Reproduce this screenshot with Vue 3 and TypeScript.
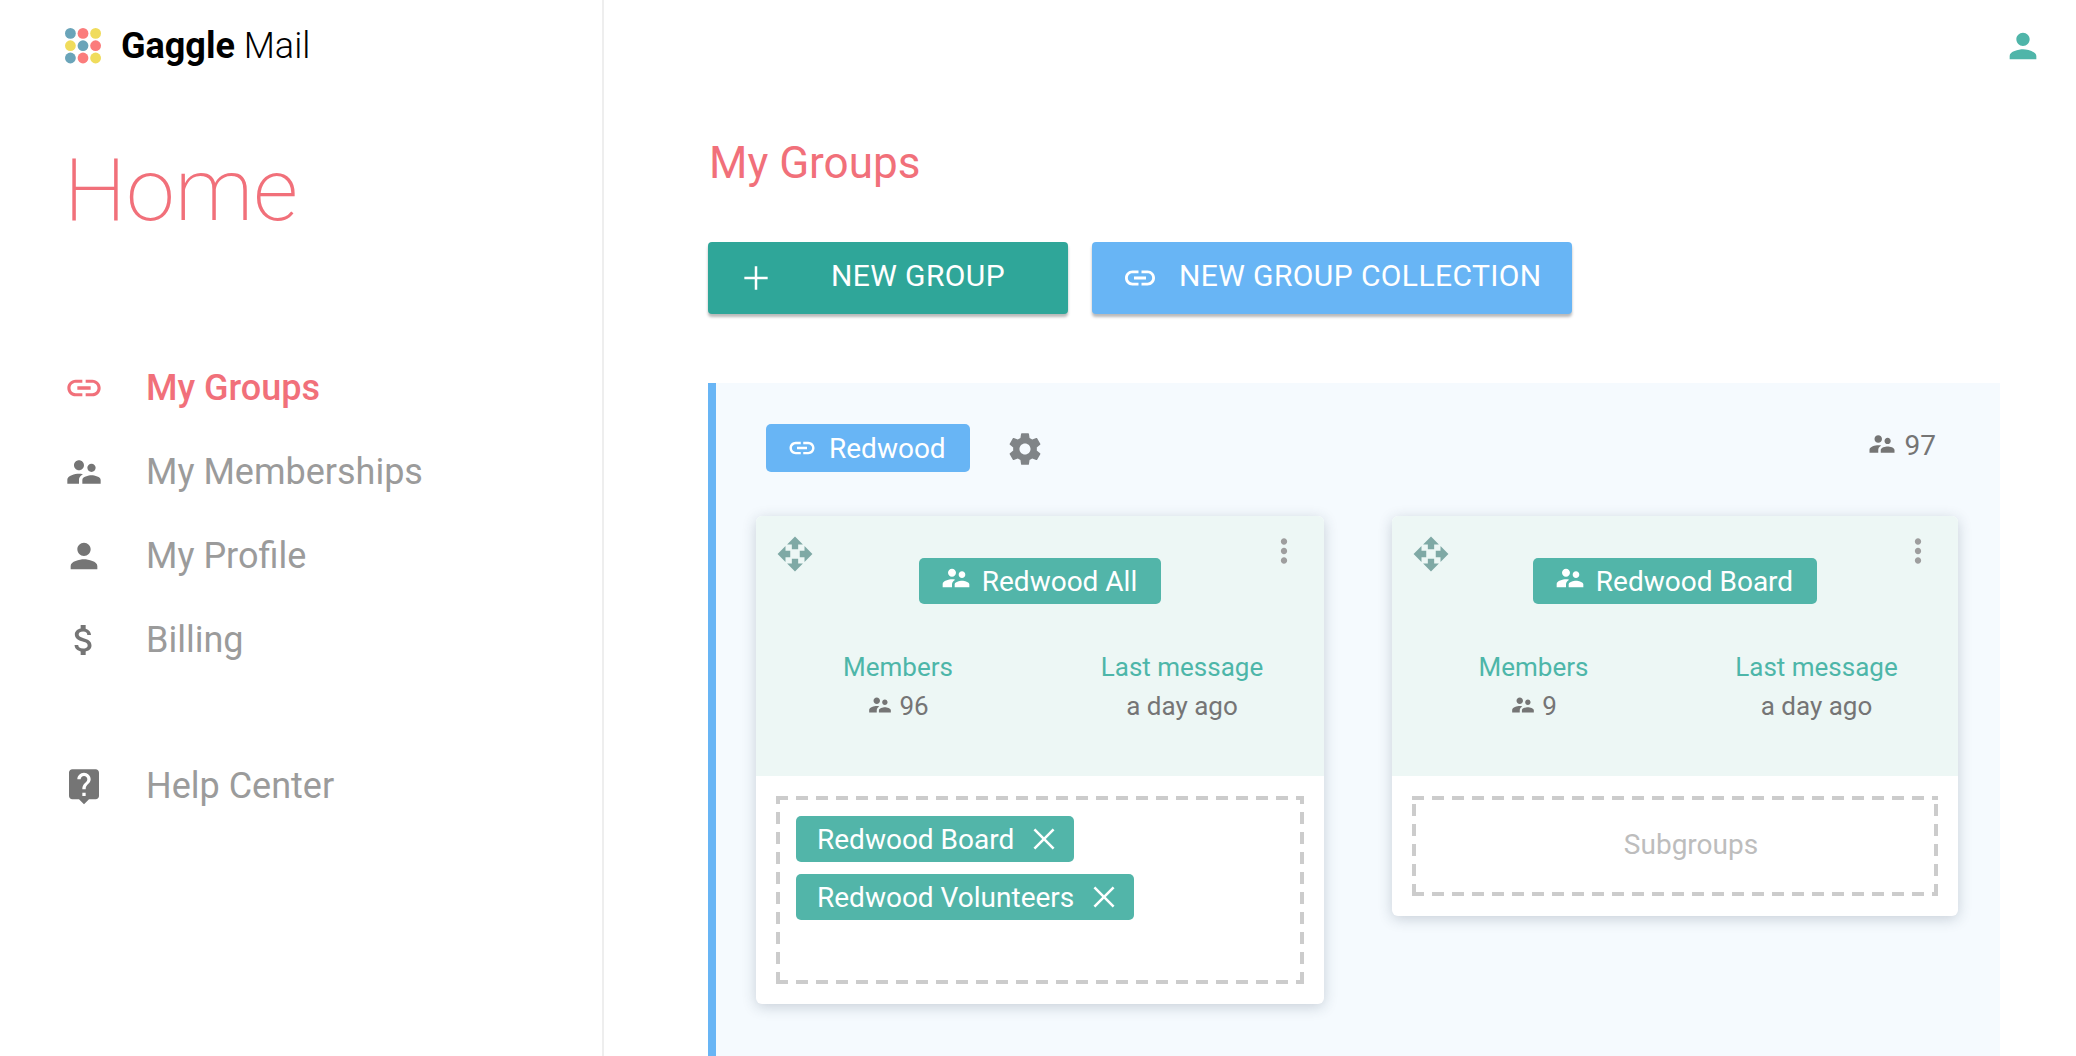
<script setup lang="ts">
const icons: Record<string, string> = {
  link: 'M3.9 12c0-1.71 1.39-3.1 3.1-3.1h4V7H7c-2.76 0-5 2.24-5 5s2.24 5 5 5h4v-1.9H7c-1.71 0-3.1-1.39-3.1-3.1zM8 13h8v-2H8v2zm9-6h-4v1.9h4c1.71 0 3.1 1.39 3.1 3.1s-1.39 3.1-3.1 3.1h-4V17h4c2.76 0 5-2.24 5-5s-2.24-5-5-5z',
  people: 'M16.5 12c1.38 0 2.49-1.12 2.49-2.5S17.88 7 16.5 7C15.12 7 14 8.12 14 9.5s1.12 2.5 2.5 2.5zM9 11c1.66 0 2.99-1.34 2.99-3S10.66 5 9 5C7.34 5 6 6.34 6 8s1.34 3 3 3zm7.5 3c-1.83 0-5.5.92-5.5 2.75V19h11v-2.25c0-1.83-3.67-2.75-5.5-2.75zM9 13c-2.33 0-7 1.17-7 3.5V19h7v-2.25c0-.85.33-2.34 2.37-3.47C10.5 13.1 9.66 13 9 13z',
  person: 'M12 12c2.21 0 4-1.79 4-4s-1.79-4-4-4-4 1.79-4 4 1.79 4 4 4zm0 2c-2.67 0-8 1.34-8 4v2h16v-2c0-2.66-5.33-4-8-4z',
  money: 'M11.8 10.9c-2.27-.59-3-1.2-3-2.15 0-1.09 1.01-1.85 2.7-1.85 1.78 0 2.44.85 2.5 2.1h2.21c-.07-1.72-1.12-3.3-3.21-3.81V3h-3v2.16c-1.94.42-3.5 1.68-3.5 3.61 0 2.31 1.91 3.46 4.7 4.13 2.5.6 3 1.48 3 2.41 0 .69-.49 1.79-2.7 1.79-2.06 0-2.87-.92-2.98-2.1h-2.2c.12 2.19 1.76 3.42 3.68 3.83V21h3v-2.15c1.95-.37 3.5-1.5 3.5-3.55 0-2.84-2.43-3.81-4.7-4.4z',
  help: 'M19 2H5c-1.11 0-2 .9-2 2v14c0 1.1.89 2 2 2h4l3 3 3-3h4c1.1 0 2-.9 2-2V4c0-1.1-.9-2-2-2zm-6 16h-2v-2h2v2zm2.07-7.75l-.9.92C13.45 11.9 13 12.5 13 14h-2v-.5c0-1.1.45-2.1 1.17-2.83l1.24-1.26c.37-.36.59-.86.59-1.41 0-1.1-.9-2-2-2s-2 .9-2 2H8c0-2.21 1.79-4 4-4s4 1.79 4 4c0 .88-.36 1.68-.93 2.25z',
  gear: 'M19.43 12.98c.04-.32.07-.64.07-.98s-.03-.66-.07-.98l2.11-1.65c.19-.15.24-.42.12-.64l-2-3.46c-.12-.22-.39-.3-.61-.22l-2.49 1c-.52-.4-1.08-.73-1.69-.98l-.38-2.65C14.46 2.18 14.25 2 14 2h-4c-.25 0-.46.18-.49.42l-.38 2.65c-.61.25-1.17.59-1.69.98l-2.49-1c-.23-.09-.49 0-.61.22l-2 3.46c-.13.22-.07.49.12.64l2.11 1.65c-.04.32-.07.65-.07.98s.03.66.07.98l-2.11 1.65c-.19.15-.24.42-.12.64l2 3.46c.12.22.39.3.61.22l2.49-1c.52.4 1.08.73 1.69.98l.38 2.65c.03.24.24.42.49.42h4c.25 0 .46-.18.49-.42l.38-2.65c.61-.25 1.17-.59 1.69-.98l2.49 1c.23.09.49 0 .61-.22l2-3.46c.12-.22.07-.49-.12-.64l-2.11-1.65zM12 15.5c-1.93 0-3.5-1.57-3.5-3.5s1.57-3.5 3.5-3.5 3.5 1.57 3.5 3.5-1.57 3.5-3.5 3.5z',
  more: 'M12 8c1.1 0 2-.9 2-2s-.9-2-2-2-2 .9-2 2 .9 2 2 2zm0 2c-1.1 0-2 .9-2 2s.9 2 2 2 2-.9 2-2-.9-2-2-2zm0 6c-1.1 0-2 .9-2 2s.9 2 2 2 2-.9 2-2-.9-2-2-2z',
  move: 'M10 9h4V6h3l-5-5-5 5h3v3zm-1 1H6V7l-5 5 5 5v-3h3v-4zm14 2l-5-5v3h-3v4h3v3l5-5zm-9 3h-4v3H7l5 5 5-5h-3v-3z',
  plus: 'M19 12.75h-6.25V19h-1.5v-6.25H5v-1.5h6.25V5h1.5v6.25H19z',
  close: 'M19 6.2 17.8 5 12 10.8 6.2 5 5 6.2 10.8 12 5 17.8 6.2 19 12 13.2 17.8 19 19 17.8 13.2 12z',
}

const nav = [
  { label: 'My Groups', icon: 'link', active: true },
  { label: 'My Memberships', icon: 'people' },
  { label: 'My Profile', icon: 'person' },
  { label: 'Billing', icon: 'money' },
  { label: 'Help Center', icon: 'help', spaced: true },
]

const dotColors = ['#6aa4b9', '#fb7c7c', '#f0dc5c', '#f0dc5c', '#6aa4b9', '#fb7c7c', '#6aa4b9', '#fb7c7c', '#f0dc5c']

const cards = [
  { name: 'Redwood All', members: 96, last: 'a day ago', subgroups: ['Redwood Board', 'Redwood Volunteers'] },
  { name: 'Redwood Board', members: 9, last: 'a day ago', subgroups: [] as string[] },
]
</script>

<template>
  <div class="app">
    <aside class="sidebar">
      <div class="brand">
        <svg class="dots" width="36" height="36" viewBox="0 0 36 36">
          <circle
            v-for="(c, i) in dotColors"
            :key="i"
            :cx="5.4 + (i % 3) * 12.6"
            :cy="5.4 + Math.floor(i / 3) * 12.3"
            r="5.4"
            :fill="c"
          />
        </svg>
        <span class="brand-name"><b>Gaggle</b> Mail</span>
      </div>
      <h1 class="home">Home</h1>
      <nav class="nav">
        <a
          v-for="item in nav"
          :key="item.label"
          class="nav-item"
          :class="{ active: item.active, spaced: item.spaced }"
        >
          <svg class="nav-icon" viewBox="0 0 24 24"><path :d="icons[item.icon]" /></svg>
          <span>{{ item.label }}</span>
        </a>
      </nav>
    </aside>

    <main class="main">
      <div class="topbar">
        <svg class="user" viewBox="0 0 24 24"><path :d="icons.person" /></svg>
      </div>
      <h2 class="title">My Groups</h2>
      <div class="actions">
        <button class="btn btn-teal">
          <svg class="btn-plus" viewBox="0 0 24 24"><path :d="icons.plus" /></svg>
          <span>NEW GROUP</span>
        </button>
        <button class="btn btn-blue">
          <svg class="btn-link" viewBox="0 0 24 24"><path :d="icons.link" /></svg>
          <span>NEW GROUP COLLECTION</span>
        </button>
      </div>

      <section class="panel">
        <header class="panel-head">
          <span class="collection">
            <svg viewBox="0 0 24 24"><path :d="icons.link" /></svg>
            Redwood
          </span>
          <svg class="gear" viewBox="0 0 24 24"><path :d="icons.gear" /></svg>
          <span class="total">
            <svg viewBox="0 0 24 24"><path :d="icons.people" /></svg>
            97
          </span>
        </header>

        <div class="cards">
          <article v-for="card in cards" :key="card.name" class="card">
            <div class="card-head">
              <svg class="move" viewBox="0 0 24 24"><path :d="icons.move" /></svg>
              <svg class="more" viewBox="0 0 24 24"><path :d="icons.more" /></svg>
              <span class="group-chip">
                <svg viewBox="0 0 24 24"><path :d="icons.people" /></svg>
                {{ card.name }}
              </span>
              <div class="stats">
                <div class="stat">
                  <div class="stat-label">Members</div>
                  <div class="stat-value">
                    <svg viewBox="0 0 24 24"><path :d="icons.people" /></svg>
                    {{ card.members }}
                  </div>
                </div>
                <div class="stat">
                  <div class="stat-label">Last message</div>
                  <div class="stat-value">{{ card.last }}</div>
                </div>
              </div>
            </div>
            <div class="card-body">
              <div class="drop" :class="{ empty: !card.subgroups.length }">
                <template v-if="card.subgroups.length">
                  <div>
                    <span v-for="s in card.subgroups" :key="s" class="tag">
                      {{ s }}
                      <svg viewBox="0 0 24 24"><path :d="icons.close" /></svg>
                    </span>
                  </div>
                </template>
                <span v-else class="placeholder">Subgroups</span>
              </div>
            </div>
          </article>
        </div>
      </section>
    </main>
  </div>
</template>

<style>
html, body { margin: 0; background: #fff; }
</style>

<style scoped>
.app {
  display: flex;
  height: 1056px;
  overflow: hidden;
  font-family: Roboto, "Liberation Sans", sans-serif;
  background: #fff;
}
svg { fill: currentColor; display: block; flex: none; }

.sidebar { width: 602px; flex: none; border-right: 2px solid #eeeeee; }
.brand { display: flex; align-items: center; height: 52px; padding: 20px 0 0 65px; }
.dots { margin-right: 20px; }
.brand-name { font-size: 36px; font-weight: 300; color: #000; }
.brand-name b { font-weight: 700; }
.home {
  margin: 74px 0 0 64px;
  font-size: 88px;
  line-height: 88px;
  font-weight: 200;
  color: #f1707a;
}
.nav { margin-top: 112px; }
.nav-item {
  display: flex;
  align-items: center;
  height: 84px;
  padding-left: 64px;
  font-size: 36px;
  color: #9b9b9b;
}
.nav-item.spaced { margin-top: 62px; }
.nav-item.active { color: #f1707a; font-weight: 500; }
.nav-icon { width: 40px; height: 40px; margin-right: 42px; color: #757575; }
.nav-item.active .nav-icon { color: #f1707a; }

.main { flex: 1; display: flex; flex-direction: column; min-width: 0; padding-left: 104px; }
.topbar { display: flex; justify-content: flex-end; height: 110px; padding: 26px 33px 0 0; }
.user { width: 40px; height: 40px; color: #4fb5a9; }
.title {
  margin: 2px 0 0 1px;
  font-size: 44px;
  line-height: 50px;
  font-weight: 450;
  color: #f1707a;
}
.actions { display: flex; gap: 24px; margin-top: 54px; }
.btn {
  display: flex;
  align-items: center;
  height: 72px;
  border: 0;
  border-radius: 4px;
  color: #fff;
  font-family: inherit;
  font-size: 30px;
  letter-spacing: 0.4px;
  box-shadow: 0 3px 3px rgba(0, 0, 0, 0.28);
}
.btn span { margin-top: -5px; }
.btn-teal { width: 360px; background: #2fa699; padding: 0 0 0 28px; }
.btn-plus { width: 40px; height: 40px; margin-right: 55px; }
.btn-blue { width: 480px; background: #68b5f5; padding: 0 0 0 30px; }
.btn-link { width: 36px; height: 36px; margin-right: 21px; }

.panel {
  flex: 1;
  margin-top: 69px;
  border-left: 8px solid #68b5f5;
  background: #f5fafe;
  padding: 41px 42px 0 40px;
  width: 1202px;
}
.panel-head { display: flex; align-items: center; height: 48px; padding-left: 10px; color: #757575; }
.collection {
  display: flex;
  align-items: center;
  height: 48px;
  width: 204px;
  box-sizing: border-box;
  padding-left: 21px;
  background: #68b5f5;
  border-radius: 5px;
  color: #fff;
  font-size: 28px;
}
.collection svg { width: 30px; height: 30px; margin-right: 12px; margin-top: -1px; }
.gear { width: 38px; height: 38px; margin-left: 36px; margin-top: 2px; color: #808487; }
.total { display: flex; align-items: center; margin-left: auto; margin-right: 22px; font-size: 28px; margin-top: -6px; }
.total svg { width: 30px; height: 30px; margin-right: 8px; margin-top: -2px; }

.cards { display: grid; grid-template-columns: 568px 566px; column-gap: 68px; align-items: start; margin-top: 44px; }
.card { background: #fff; border-radius: 6px; overflow: hidden; box-shadow: 0 3px 14px rgba(40, 60, 80, 0.22); }
.card-head {
  position: relative;
  height: 260px;
  box-sizing: border-box;
  padding-top: 42px;
  background: #edf7f5;
  display: flex;
  flex-direction: column;
  align-items: center;
}
.move { position: absolute; left: 20px; top: 19px; width: 38px; height: 38px; color: #7fa9a5; }
.more { position: absolute; right: 21px; top: 16px; width: 38px; height: 38px; color: #9e9e9e; }
.group-chip {
  display: flex;
  align-items: center;
  height: 46px;
  padding: 0 24px 0 21px;
  background: #52b5a9;
  border-radius: 5px;
  color: #fff;
  font-size: 28px;
}
.group-chip svg { width: 32px; height: 32px; margin-right: 10px; margin-top: -6px; }
.stats { display: grid; grid-template-columns: 1fr 1fr; width: 100%; margin-top: 43px; text-align: center; }
.stat-label { font-size: 26px; line-height: 40px; color: #4db6a9; }
.stat-value {
  display: flex;
  align-items: center;
  justify-content: center;
  font-size: 26px;
  line-height: 38px;
  color: #757575;
}
.stat-value svg { width: 26px; height: 26px; margin-right: 6px; margin-top: -2px; }

.card-body { padding: 20px; }
.drop {
  box-sizing: border-box;
  min-height: 100px;
  padding: 20px 20px 52px;
  background:
    repeating-linear-gradient(90deg, #cccccc 0 12px, transparent 12px 20px) top / 100% 4px no-repeat,
    repeating-linear-gradient(90deg, #cccccc 0 12px, transparent 12px 20px) bottom / 100% 4px no-repeat,
    repeating-linear-gradient(0deg, #cccccc 0 12px, transparent 12px 20px) left / 4px 100% no-repeat,
    repeating-linear-gradient(0deg, #cccccc 0 12px, transparent 12px 20px) right / 4px 100% no-repeat;
}
.drop.empty { display: flex; align-items: center; justify-content: center; padding: 0 0 3px 32px; }
.placeholder { font-size: 28px; color: #bdbdbd; }
.tag {
  display: flex;
  align-items: center;
  width: fit-content;
  height: 46px;
  margin-bottom: 12px;
  padding: 0 12px 0 21px;
  background: #52b5a9;
  border-radius: 5px;
  color: #fff;
  font-size: 28px;
}
.tag svg { width: 36px; height: 36px; margin-left: 12px; }
</style>
